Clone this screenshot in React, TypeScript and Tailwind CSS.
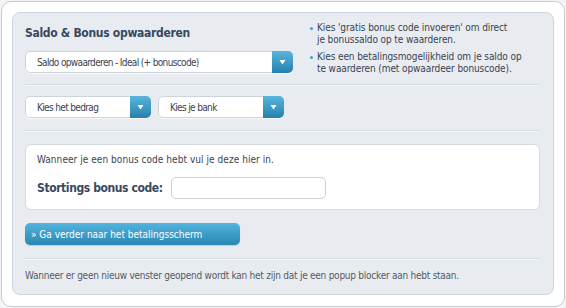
import React from "react";

const font = { fontFamily: '"DejaVu Sans Condensed", "DejaVu Sans", Verdana, sans-serif' };

function Arrow() {
  return (
    <svg width="7" height="6" viewBox="0 0 7 6">
      <path d="M0.5 1 L6.5 1 L3.5 5.5 Z" fill="#ffffff" />
    </svg>
  );
}

function Select({ label, width }: { label: string; width: string }) {
  return (
    <div className={`flex h-[22px] ${width} rounded-[5px] border border-[#cbd3db] bg-white shadow-[0_1px_0_#f7f9fb]`}>
      <div className="flex flex-1 items-center pl-[11px] text-[10px] tracking-[-0.65px] text-[#3a4350]">{label}</div>
      <div className="-m-px flex w-[21px] items-center justify-center rounded-r-[5px] bg-gradient-to-b from-[#58b6dc] to-[#2680ad]">
        <Arrow />
      </div>
    </div>
  );
}

function Divider() {
  return <div className="h-[2px] border-t border-[#d6dde4] border-b border-b-[#f4f6f8]" />;
}

export default function App() {
  return (
    <div className="h-[308px] w-[566px] bg-[#f2f4f6] p-px" style={font}>
      <div className="h-[306px] w-[564px] rounded-[10px] border border-[#c4ccd5] bg-white p-[10px]">
        <div className="flex h-[283px] flex-col rounded-[8px] border border-[#cdd5dd] bg-[#e8ecf1] pl-[12px] pr-[13px]">
          <div className="flex h-[60px] items-start pt-[9px]">
            <div className="flex w-[268px] flex-col">
              <div className="pt-[2px] text-[12px] font-bold leading-[18px] tracking-[-0.3px] text-[#374860]">Saldo &amp; Bonus opwaarderen</div>
              <div className="mt-[9px]">
                <Select label="Saldo opwaarderen - Ideal (+ bonuscode)" width="w-[268px]" />
              </div>
            </div>
            <div className="ml-[17px] flex flex-col gap-[6px] text-[10px] leading-[11.5px] tracking-[-0.1px] text-[#3a4350]">
              <div className="flex">
                <span className="mr-[4px] mt-[5px] h-[3px] w-[3px] shrink-0 rounded-full bg-[#3aa2d2]" />
                <span>Kies 'gratis bonus code invoeren' om direct<br />je bonussaldo op te waarderen.</span>
              </div>
              <div className="flex">
                <span className="mr-[4px] mt-[5px] h-[3px] w-[3px] shrink-0 rounded-full bg-[#3aa2d2]" />
                <span>Kies een betalingsmogelijkheid om je saldo op<br />te waarderen (met opwaardeer bonuscode).</span>
              </div>
            </div>
          </div>
          <div className="mt-[11px]"><Divider /></div>
          <div className="mt-[10px] flex gap-[7px]">
            <Select label="Kies het bedrag" width="w-[126px]" />
            <Select label="Kies je bank" width="w-[126px]" />
          </div>
          <div className="mt-[12px]"><Divider /></div>
          <div className="mt-[12px] flex h-[66px] flex-col rounded-[6px] border border-[#d3dae1] bg-white px-[11px] pt-[8px]">
            <div className="text-[10px] leading-[14px] tracking-[0.05px] text-[#3a4350]">Wanneer je een bonus code hebt vul je deze hier in.</div>
            <div className="mt-[10px] flex items-center">
              <span className="text-[12px] font-bold tracking-[-0.4px] text-[#374860]">Stortings bonus code:</span>
              <div className="ml-[8px] h-[22px] w-[155px] rounded-[5px] border border-[#cbd1d8] bg-white" />
            </div>
          </div>
          <div className="mt-[13px]">
            <div className="flex h-[22px] w-[215px] items-center rounded-[5px] bg-gradient-to-b from-[#52b5de] to-[#2a86b3] pl-[6px] text-[10px] text-white shadow-[0_1px_1px_rgba(0,0,0,0.15)]">
              » Ga verder naar het betalingsscherm
            </div>
          </div>
          <div className="mt-[13px]"><Divider /></div>
          <div className="mt-[9px] text-[10px] leading-[14px] tracking-[-0.25px] text-[#555b62]">
            Wanneer er geen nieuw venster geopend wordt kan het zijn dat je een popup blocker aan hebt staan.
          </div>
        </div>
      </div>
    </div>
  );
}
